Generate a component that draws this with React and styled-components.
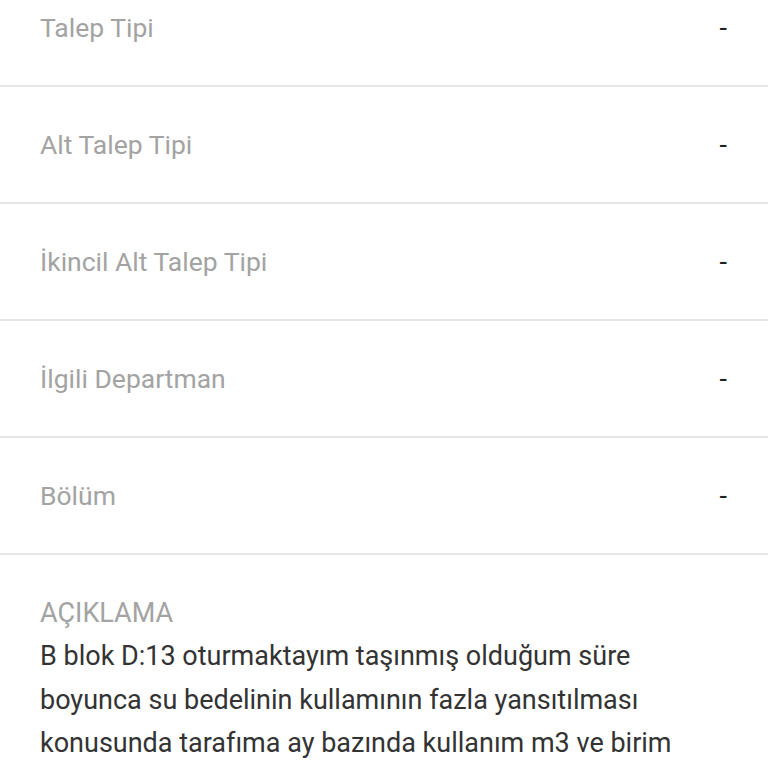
import React from "react";
import styled, { createGlobalStyle } from "styled-components";

const GlobalStyle = createGlobalStyle`
  html, body {
    margin: 0;
    padding: 0;
    background: #fff;
    overflow: hidden;
  }
  body {
    font-family: Roboto, "Noto Sans", sans-serif;
  }
`;

const Page = styled.div`
  width: 768px;
  height: 768px;
  overflow: hidden;
  background: #fff;
`;

// the screen is scrolled a little, so the first row is cut at the top
const List = styled.div`
  margin-top: -30px;
`;

const Row = styled.div`
  height: 115px;
  display: flex;
  align-items: center;
  justify-content: space-between;
  padding: 0 41px 0 40px;
  border-bottom: 2px solid #e6e6e6;
`;

const Label = styled.span`
  font-size: 26.5px;
  color: #a3a3a3;
`;

const Value = styled.span`
  font-size: 27px;
  color: #222;
`;

const Description = styled.div`
  padding: 41px 40px 0;
`;

const DescTitle = styled.div`
  font-size: 27px;
  color: #a3a3a3;
  line-height: 34px;
  margin-bottom: 5px;
  text-transform: uppercase;
`;

const DescText = styled.p`
  margin: 0;
  font-size: 27px;
  line-height: 43.5px;
  color: #333;
`;

const rows = [
  "Talep Tipi",
  "Alt Talep Tipi",
  "İkincil Alt Talep Tipi",
  "İlgili Departman",
  "Bölüm",
];

export default function App() {
  return (
    <Page>
      <GlobalStyle />
      <List>
        {rows.map((r) => (
          <Row key={r}>
            <Label>{r}</Label>
            <Value>-</Value>
          </Row>
        ))}
      </List>
      <Description>
        <DescTitle>AÇIKLAMA</DescTitle>
        <DescText>
          B blok D:13 oturmaktayım taşınmış olduğum süre boyunca su bedelinin
          kullamının fazla yansıtılması konusunda tarafıma ay bazında kullanım
          m3 ve birim fiyatlarının iletilmesini rica ederim.
        </DescText>
      </Description>
    </Page>
  );
}
